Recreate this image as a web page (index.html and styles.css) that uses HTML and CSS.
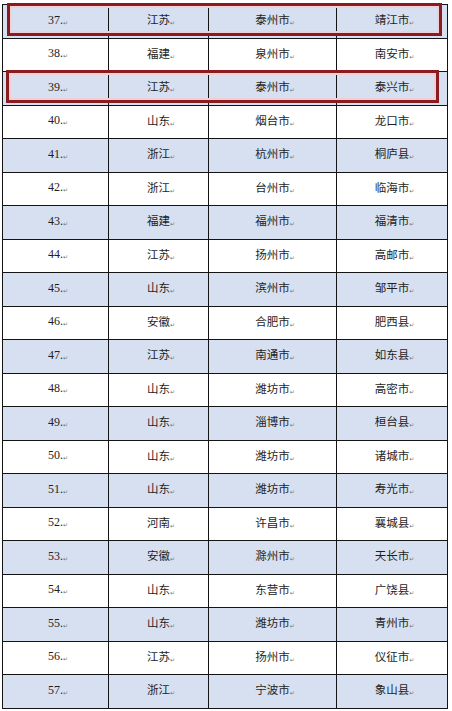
FILE: index.html
```html
<!DOCTYPE html>
<html lang="zh-CN">
<head>
<meta charset="utf-8">
<link rel="stylesheet" href="styles.css">
</head>
<body>
<div class="wrap">
  <table class="list">
    <colgroup>
      <col class="c1"><col class="c2"><col class="c3"><col class="c4">
    </colgroup>
    <tbody>
      <tr class="blue"><td>37.<span class="pm">↵</span></td><td>江苏<span class="pm">↵</span></td><td>泰州市<span class="pm">↵</span></td><td>靖江市<span class="pm">↵</span></td></tr>
      <tr><td>38.<span class="pm">↵</span></td><td>福建<span class="pm">↵</span></td><td>泉州市<span class="pm">↵</span></td><td>南安市<span class="pm">↵</span></td></tr>
      <tr class="blue"><td>39.<span class="pm">↵</span></td><td>江苏<span class="pm">↵</span></td><td>泰州市<span class="pm">↵</span></td><td>泰兴市<span class="pm">↵</span></td></tr>
      <tr><td>40.<span class="pm">↵</span></td><td>山东<span class="pm">↵</span></td><td>烟台市<span class="pm">↵</span></td><td>龙口市<span class="pm">↵</span></td></tr>
      <tr class="blue"><td>41.<span class="pm">↵</span></td><td>浙江<span class="pm">↵</span></td><td>杭州市<span class="pm">↵</span></td><td>桐庐县<span class="pm">↵</span></td></tr>
      <tr><td>42.<span class="pm">↵</span></td><td>浙江<span class="pm">↵</span></td><td>台州市<span class="pm">↵</span></td><td>临海市<span class="pm">↵</span></td></tr>
      <tr class="blue"><td>43.<span class="pm">↵</span></td><td>福建<span class="pm">↵</span></td><td>福州市<span class="pm">↵</span></td><td>福清市<span class="pm">↵</span></td></tr>
      <tr><td>44.<span class="pm">↵</span></td><td>江苏<span class="pm">↵</span></td><td>扬州市<span class="pm">↵</span></td><td>高邮市<span class="pm">↵</span></td></tr>
      <tr class="blue"><td>45.<span class="pm">↵</span></td><td>山东<span class="pm">↵</span></td><td>滨州市<span class="pm">↵</span></td><td>邹平市<span class="pm">↵</span></td></tr>
      <tr><td>46.<span class="pm">↵</span></td><td>安徽<span class="pm">↵</span></td><td>合肥市<span class="pm">↵</span></td><td>肥西县<span class="pm">↵</span></td></tr>
      <tr class="blue"><td>47.<span class="pm">↵</span></td><td>江苏<span class="pm">↵</span></td><td>南通市<span class="pm">↵</span></td><td>如东县<span class="pm">↵</span></td></tr>
      <tr><td>48.<span class="pm">↵</span></td><td>山东<span class="pm">↵</span></td><td>潍坊市<span class="pm">↵</span></td><td>高密市<span class="pm">↵</span></td></tr>
      <tr class="blue"><td>49.<span class="pm">↵</span></td><td>山东<span class="pm">↵</span></td><td>淄博市<span class="pm">↵</span></td><td>桓台县<span class="pm">↵</span></td></tr>
      <tr><td>50.<span class="pm">↵</span></td><td>山东<span class="pm">↵</span></td><td>潍坊市<span class="pm">↵</span></td><td>诸城市<span class="pm">↵</span></td></tr>
      <tr class="blue"><td>51.<span class="pm">↵</span></td><td>山东<span class="pm">↵</span></td><td>潍坊市<span class="pm">↵</span></td><td>寿光市<span class="pm">↵</span></td></tr>
      <tr><td>52.<span class="pm">↵</span></td><td>河南<span class="pm">↵</span></td><td>许昌市<span class="pm">↵</span></td><td>襄城县<span class="pm">↵</span></td></tr>
      <tr class="blue"><td>53.<span class="pm">↵</span></td><td>安徽<span class="pm">↵</span></td><td>滁州市<span class="pm">↵</span></td><td>天长市<span class="pm">↵</span></td></tr>
      <tr><td>54.<span class="pm">↵</span></td><td>山东<span class="pm">↵</span></td><td>东营市<span class="pm">↵</span></td><td>广饶县<span class="pm">↵</span></td></tr>
      <tr class="blue"><td>55.<span class="pm">↵</span></td><td>山东<span class="pm">↵</span></td><td>潍坊市<span class="pm">↵</span></td><td>青州市<span class="pm">↵</span></td></tr>
      <tr><td>56.<span class="pm">↵</span></td><td>江苏<span class="pm">↵</span></td><td>扬州市<span class="pm">↵</span></td><td>仪征市<span class="pm">↵</span></td></tr>
      <tr class="blue"><td>57.<span class="pm">↵</span></td><td>浙江<span class="pm">↵</span></td><td>宁波市<span class="pm">↵</span></td><td>象山县<span class="pm">↵</span></td></tr>
    </tbody>
  </table>
  <div class="mark mark-a"></div>
  <div class="mark mark-b"></div>
</div>
</body>
</html>
```

FILE: styles.css
```css
html, body {
  margin: 0;
  padding: 0;
  background: #ffffff;
}

body {
  width: 452px;
  height: 711px;
  overflow: hidden;
  font-family: "Liberation Serif", "Noto Sans CJK SC", serif;
  color: #1e1e1e;
}

.wrap {
  position: relative;
  padding: 4px 0 0 2px;
}

.list {
  border-collapse: collapse;
  table-layout: fixed;
  width: 445px;
}

.c1 { width: 106px; }
.c2 { width: 100px; }
.c3 { width: 128px; }
.c4 { width: 111px; }

.list td {
  height: 32.5px;
  padding: 0;
  border: 1.2px solid #141414;
  text-align: center;
  vertical-align: middle;
  font-size: 12px;
  line-height: 14px;
  color: #1e1e1e;
}

.list td:nth-child(n+2) {
  font-family: "Noto Sans CJK SC", sans-serif;
  font-size: 11.5px;
  color: #1e1e1e;
}

.list tr.blue td {
  background: #d6e0f0;
}

.pm {
  display: inline-block;
  width: 0;
  overflow: visible;
  font-family: "DejaVu Sans", sans-serif;
  font-size: 6px;
  color: #777;
  vertical-align: -1px;
  white-space: nowrap;
}

.mark {
  position: absolute;
  box-sizing: border-box;
  border: 3px solid #8a1b1e;
  box-shadow: inset 0 0 0 2px #f1cfd6;
}

.mark-a {
  left: 7px;
  top: 3px;
  width: 435px;
  height: 33px;
}

.mark-b {
  left: 6px;
  top: 70px;
  width: 433px;
  height: 33px;
}
```
